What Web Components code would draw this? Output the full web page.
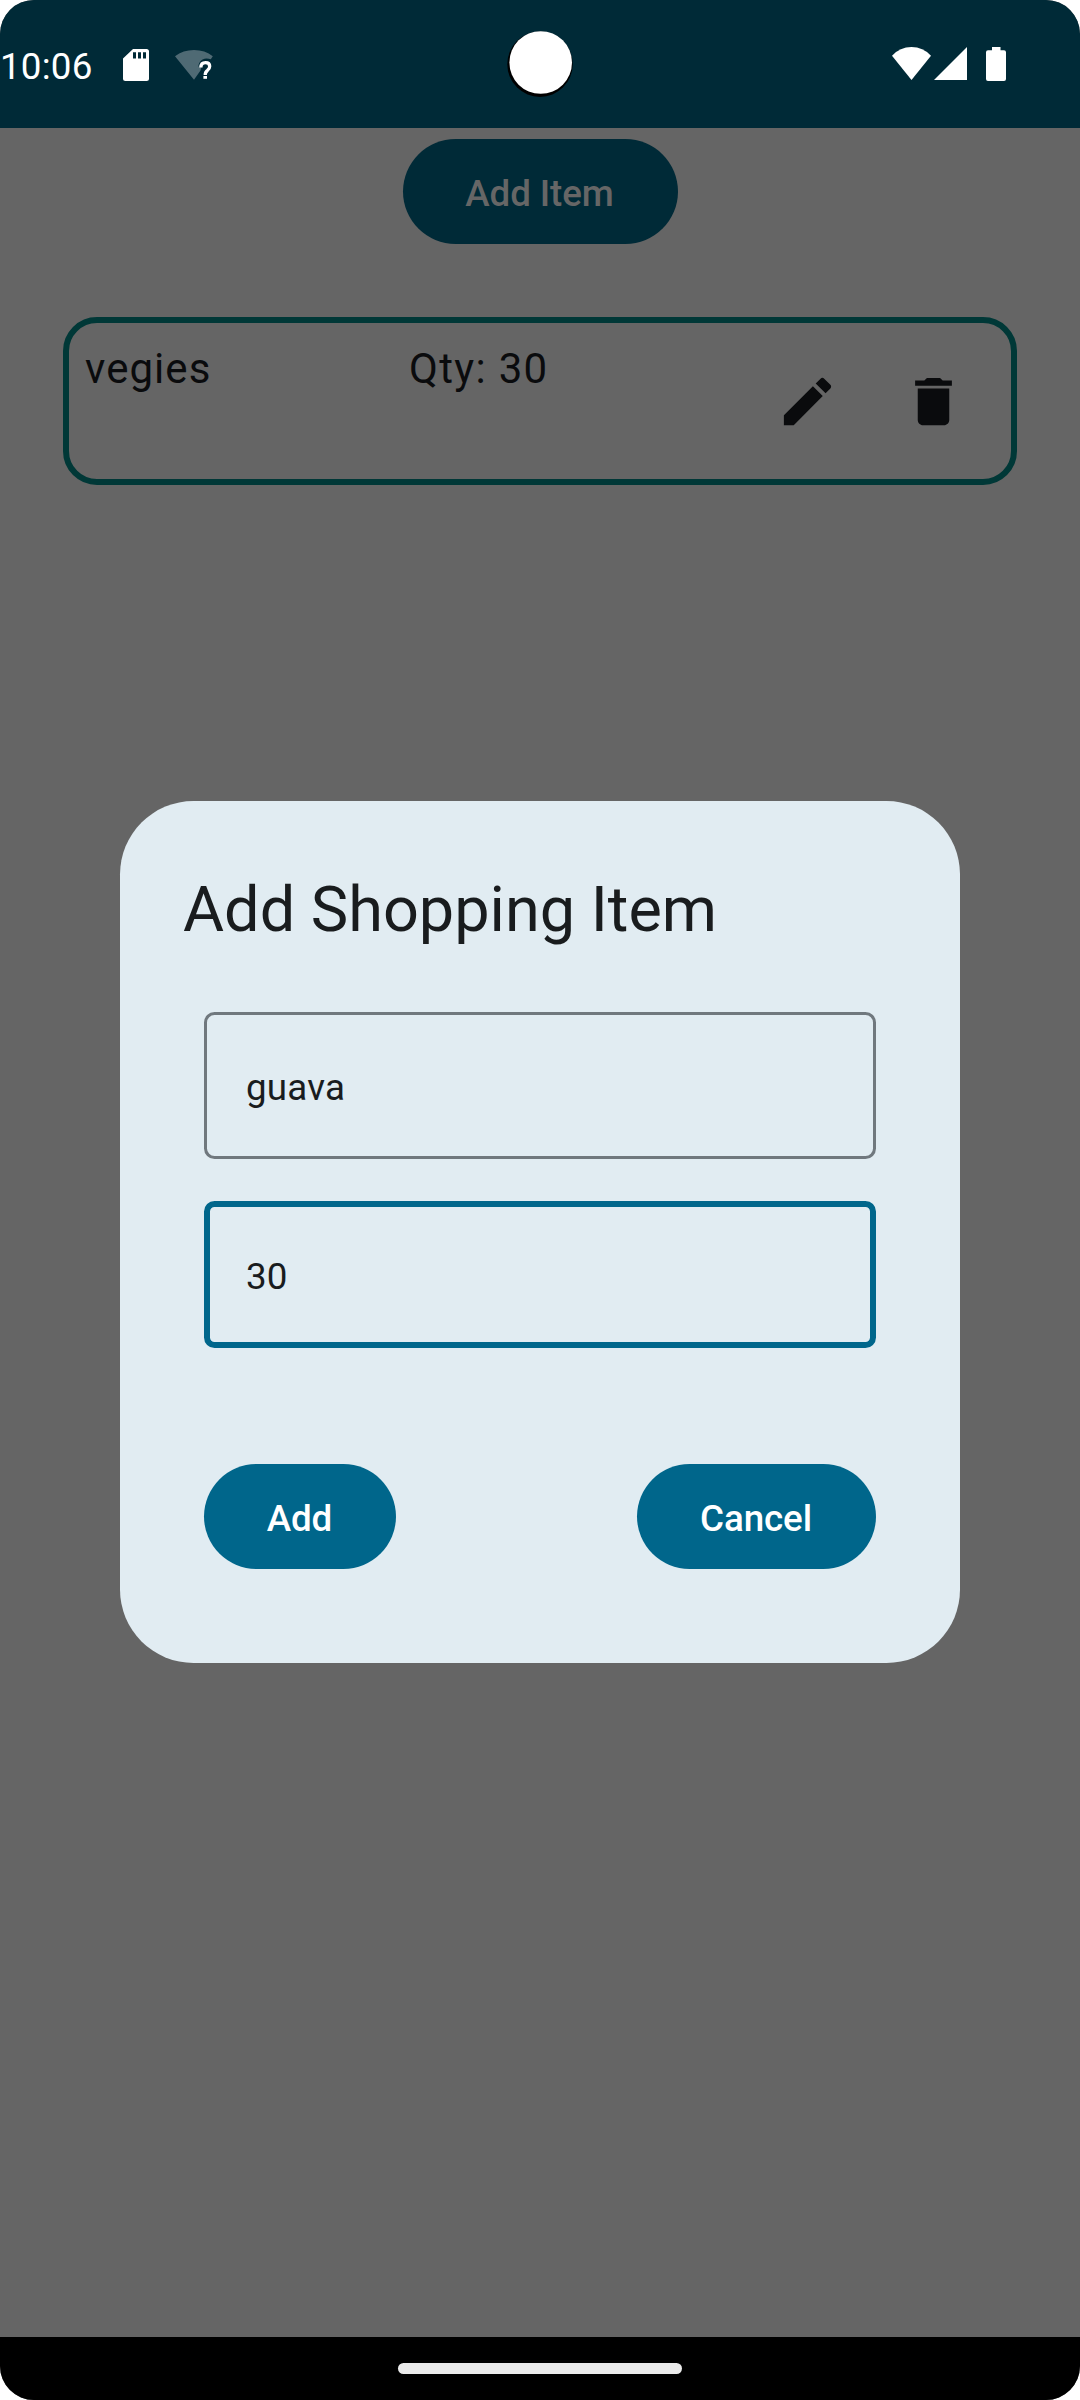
<!DOCTYPE html>
<html lang="en">
<head>
<meta charset="utf-8">
<title>Shopping List</title>
<style>
html,body{margin:0;background:#fff}
body{font-family:Roboto,"Noto Sans",sans-serif;width:1080px;height:2400px;overflow:hidden}
</style>
</head>
<body>
<shopping-app></shopping-app>
<script>
function define(name, markup) {
  const t = document.createElement('template');
  t.innerHTML = markup;
  customElements.define(name, class extends HTMLElement {
    constructor() {
      super();
      this.attachShadow({ mode: 'open' }).append(t.content.cloneNode(true));
    }
  });
}

define('status-bar', `
<style>
:host{display:flex;height:128px;background:#002a37;color:#fff;position:relative;align-items:flex-start}
.time{font-size:36.75px;line-height:44px;padding:45px 0 0 0;letter-spacing:.2px;width:122px;box-sizing:border-box;white-space:nowrap}
svg{display:block}
.left{flex:1;height:128px}
.cam{position:absolute;left:500px;top:24px}
</style>
<span class="time"><slot></slot></span>
<svg class="left" width="958" height="128" viewBox="122 0 958 128" fill="#fff">
  <path fill-rule="evenodd" d="M133 49H146.500Q149 49 149 51.500V78.500Q149 81 146.500 81H125.500Q123 81 123 78.500V58.500ZM133 52.300V58.600H136V52.300ZM138 52.300V58.600H141V52.300ZM143 52.300V58.600H146V52.300Z"/>
  <path fill="#4f6a74" d="M175 56.300Q183 50 194 50Q205 50 212.800 56.300L210.800 59.300Q208 58.300 204.500 58.700Q199 60.300 198.300 66.500H201.500L200.500 70.500L194 79.700Z"/>
  <path fill="none" stroke="#fff" stroke-width="3.300" d="M200.900 67.500Q200.900 62.700 205.500 62.700Q209.700 62.700 209.700 66.300Q209.700 68.500 207.500 70.300Q205.200 72 205.200 75"/>
  <rect x="203.400" y="76" width="3.600" height="2.800"/>
  <path d="M892 55.700Q900 47 911.500 47Q923 47 931 55.700L911.500 80Z"/>
  <path d="M967 47V80H934Z"/>
  <path d="M992 47H1000.500V50.300H1004Q1006 50.300 1006 52.300V79Q1006 81 1004 81H988Q986 81 986 79V52.300Q986 50.300 988 50.300H992Z"/>
</svg>
<svg class="cam" width="80" height="80" viewBox="500 24 80 80">
  <circle cx="540" cy="64.200" r="32.700" fill="#000"/>
  <circle cx="540.700" cy="62.500" r="31.300" fill="#fff"/>
</svg>`);

define('pill-button', `
<style>
:host{display:flex;align-items:center;justify-content:center;box-sizing:border-box;height:105px;border-radius:52.5px;
background:var(--pill-bg,#00668b);color:var(--pill-fg,#fff);font-size:36.75px;font-weight:500;letter-spacing:-.12px;line-height:52px;white-space:nowrap}
span{padding:4px 1px 0 0}
</style><span><slot></slot></span>`);

define('icon-button', `
<style>
:host{display:flex;width:126px;height:126px;align-items:center;justify-content:center}
::slotted(svg){width:63px;height:63px;display:block}
</style><slot></slot>`);

define('shopping-item', `
<style>
:host{display:flex;box-sizing:border-box;height:168px;border:6px solid #003837;border-radius:34px;padding:14px 15px 15px 16px;color:#0a0b0d;
font-size:42px;line-height:63px;letter-spacing:1.31px}
.name,.qty{white-space:nowrap}
.name{width:324px;letter-spacing:1.05px}
.qty{flex:1}
.tools{display:flex;width:252px;padding-top:1px}
</style>
<div class="name"><slot name="name"></slot></div>
<div class="qty"><slot name="qty"></slot></div>
<div class="tools">
<icon-button><svg viewBox="0 0 24 24" fill="#0a0b0d"><path d="M3 17.250V21h3.750L17.810 9.940l-3.750-3.750L3 17.250zM20.710 7.040c.39-.39.39-1.020 0-1.410l-2.340-2.340c-.39-.39-1.020-.39-1.410 0l-1.830 1.830 3.750 3.750 1.830-1.830z"/></svg></icon-button>
<icon-button><svg viewBox="0 0 24 24" fill="#0a0b0d"><path d="M6 19c0 1.100.9 2 2 2h8c1.100 0 2-.9 2-2V7H6v12zM19 4h-3.500l-1-1h-5l-1 1H5v2h14V4z"/></svg></icon-button>
</div>`);

define('text-field', `
<style>
:host{display:flex;align-items:center;box-sizing:border-box;height:147px;border:3px solid #70787e;border-radius:10.5px;
padding-left:39px;font-size:36.75px;line-height:52px;letter-spacing:.2px;color:#191c1e}
:host([focused]){border:6px solid #00668b;padding-left:36px}
span{padding-top:5px}
</style><span><slot></slot></span>`);

define('add-dialog', `
<style>
:host{display:flex;flex-direction:column;box-sizing:border-box;width:840px;height:862px;background:#e1ecf2;border-radius:73.5px;padding:67px 63px 63px}
h2{margin:0;font-size:63px;font-weight:400;line-height:84px;color:#191c1e;white-space:nowrap}
.fields{display:flex;flex-direction:column;gap:42px;padding:60px 21px 0}
.actions{display:flex;justify-content:space-between;padding:116px 21px 0}
.add{width:192px}.cancel{width:239px}
</style>
<h2><slot name="title"></slot></h2>
<div class="fields"><slot></slot></div>
<div class="actions"><pill-button class="add">Add</pill-button><pill-button class="cancel">Cancel</pill-button></div>`);

define('nav-bar', `
<style>
:host{display:flex;height:63px;background:#000;justify-content:center;align-items:flex-start;padding-top:26px;box-sizing:border-box}
i{display:block;width:284px;height:11px;border-radius:5.5px;background:#ebebeb}
</style><i></i>`);

define('shopping-app', `
<style>
:host{display:flex;flex-direction:column;width:1080px;height:2400px;background:#656565;border-radius:34px;overflow:hidden}
main{flex:1;display:flex;flex-direction:column;align-items:center;padding-top:11px;box-sizing:border-box}
.top{width:275px;--pill-bg:#002a37;--pill-fg:#666}
shopping-item{width:954px;margin-top:73px}
add-dialog{margin-top:316px}
</style>
<status-bar>10:06</status-bar>
<main>
<pill-button class="top">Add Item</pill-button>
<shopping-item><span slot="name">vegies</span><span slot="qty">Qty: 30</span></shopping-item>
<add-dialog><span slot="title">Add Shopping Item</span>
<text-field>guava</text-field><text-field focused>30</text-field></add-dialog>
</main>
<nav-bar></nav-bar>`);
</script>
</body>
</html>
